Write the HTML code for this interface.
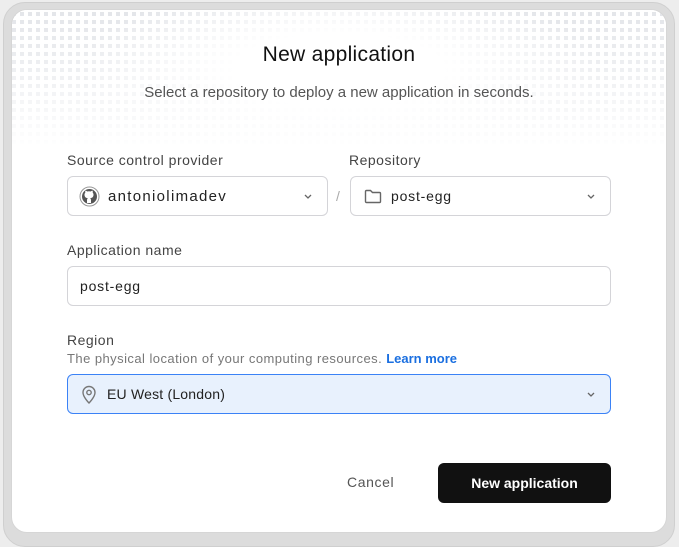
<!DOCTYPE html>
<html><head><style>
*{box-sizing:border-box;margin:0;padding:0}
body{width:679px;height:542px;background:#ededed;font-family:"Liberation Sans",sans-serif;position:relative;overflow:hidden}
.frame{position:absolute;left:3px;top:2px;width:672px;height:545px;border-radius:22px;background:#dcdcdc;border:1px solid #cfcfcf}
.card{position:absolute;left:11px;top:9px;width:656px;height:524px;border-radius:16px;background:#fff;border:1px solid #d6d6d6;overflow:hidden}
.dots{position:absolute;left:0;top:0;width:100%;height:150px;
background-image:repeating-linear-gradient(90deg,transparent 0 4px,#fff 4px 8px),repeating-linear-gradient(0deg,transparent 0 4px,#fff 4px 8px);
background-color:#e3e5e9;
-webkit-mask-image:linear-gradient(180deg,#000 0,rgba(0,0,0,.6) 60px,transparent 140px);
mask-image:linear-gradient(180deg,#000 0,rgba(0,0,0,.6) 60px,transparent 140px)}
.dotmask{position:absolute;left:0;top:0;width:100%;height:150px;background:radial-gradient(ellipse 260px 90px at 50% 60px,#fff 40%,rgba(255,255,255,0) 100%)}
h1{position:absolute;left:0;width:100%;top:33px;text-align:center;font-size:21px;letter-spacing:.3px;font-weight:normal;color:#111}
.sub{position:absolute;left:0;width:100%;top:74px;text-align:center;font-size:15px;color:#555}
.lbl{position:absolute;font-size:14px;letter-spacing:.5px;color:#444}
.inp{position:absolute;height:40px;border:1px solid #d4d4d8;border-radius:6px;background:#fff;font-size:14px;letter-spacing:.5px;color:#222;display:flex;align-items:center}
.chev{position:absolute;right:14px;top:14px}
.btn{position:absolute;left:426px;top:453px;width:173px;height:40px;background:#111;border-radius:6px;color:#fff;font-size:14px;font-weight:bold;display:flex;align-items:center;justify-content:center}
</style></head><body>
<div class="frame"></div>
<div class="card">
<div class="dots"></div><div class="dotmask"></div>
<h1>New application</h1>
<div class="sub">Select a repository to deploy a new application in seconds.</div>
<div class="lbl" style="left:55px;top:142px">Source control provider</div>
<div class="lbl" style="left:337px;top:142px">Repository</div>
<div class="inp" style="left:55px;top:166px;width:261px">
<svg style="position:absolute;left:11px;top:9px" width="21" height="21" viewBox="0 0 21 21"><circle cx="10.5" cy="10.5" r="9.5" fill="#fff" stroke="#999"/><circle cx="10.5" cy="10.5" r="7.5" fill="#555"/><path d="M8 17v-3c0-1 .5-1.5 1-1.8-2.2-.3-3.5-1.2-3.5-3.6 0-.8.3-1.4.8-2-.1-.4-.2-1.1.1-2 0 0 .7 0 2 .9a6 6 0 013.2 0c1.3-.9 2-.9 2-.9.3.9.2 1.6.1 2 .5.6.8 1.2.8 2 0 2.4-1.3 3.3-3.5 3.6.5.3 1 .9 1 1.8v3z" fill="#fff"/></svg>
<span style="margin-left:40px;font-size:15px;letter-spacing:1.3px">antoniolimadev</span>
<svg class="chev" width="10" height="10" viewBox="0 0 10 10"><path d="M2 4l3 3 3-3" stroke="#666" fill="none" stroke-width="1.3"/></svg></div>
<div style="position:absolute;left:324px;top:178px;color:#aaa;font-size:14px">/</div>
<div class="inp" style="left:338px;top:166px;width:261px">
<svg style="position:absolute;left:13px;top:12px" width="18" height="15" viewBox="0 0 18 15"><path d="M1.5 2.5a1 1 0 011-1h4l2 2h7a1 1 0 011 1v8a1 1 0 01-1 1h-13a1 1 0 01-1-1z" fill="none" stroke="#666" stroke-width="1.4"/></svg>
<span style="margin-left:40px;letter-spacing:.8px">post-egg</span>
<svg class="chev" width="10" height="10" viewBox="0 0 10 10"><path d="M2 4l3 3 3-3" stroke="#666" fill="none" stroke-width="1.3"/></svg></div>
<div class="lbl" style="left:55px;top:232px">Application name</div>
<div class="inp" style="left:55px;top:256px;width:544px"><span style="margin-left:12px;letter-spacing:.8px">post-egg</span></div>
<div class="lbl" style="left:55px;top:322px">Region</div>
<div style="position:absolute;left:55px;top:341px;font-size:13px;letter-spacing:.45px;color:#777">The physical location of your computing resources. <span style="color:#1a6fe0;font-weight:bold;letter-spacing:0">Learn more</span></div>
<div class="inp" style="left:55px;top:364px;width:544px;background:#e8f1fd;border-color:#3b82f6">
<svg style="position:absolute;left:13px;top:10px" width="16" height="20" viewBox="0 0 16 20"><path d="M8 18s6-6 6-10.5A6 6 0 002 7.5C2 12 8 18 8 18z" fill="none" stroke="#777" stroke-width="1.4"/><circle cx="8" cy="7.5" r="2.2" fill="none" stroke="#777" stroke-width="1.4"/></svg>
<span style="margin-left:39px;letter-spacing:.2px">EU West (London)</span>
<svg class="chev" width="10" height="10" viewBox="0 0 10 10"><path d="M2 4l3 3 3-3" stroke="#666" fill="none" stroke-width="1.3"/></svg></div>
<div style="position:absolute;left:335px;top:464px;font-size:14px;letter-spacing:.6px;color:#555">Cancel</div>
<div class="btn">New application</div>
</div>
</body></html>
